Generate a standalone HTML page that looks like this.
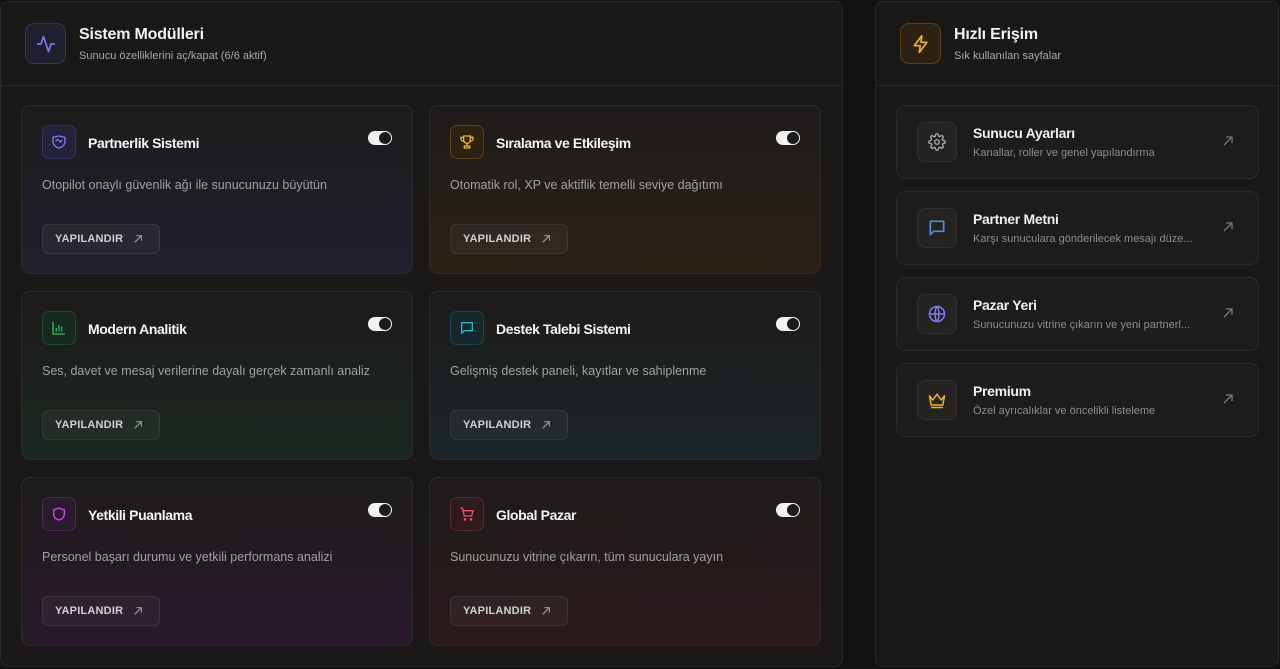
<!DOCTYPE html>
<html><head><meta charset="utf-8"><style>
*{box-sizing:border-box;margin:0;padding:0}
body{width:1280px;height:669px;background:#141210;font-family:"Liberation Sans",sans-serif;position:relative;overflow:hidden;color:#eee}
.panel{position:absolute;top:1px;height:666px;background:#1a1816;border:1px solid #2a2725;border-radius:8px}
.hdr{height:84px;border-bottom:1px solid #2a2725;position:relative}
.hicon{position:absolute;left:24px;top:21px;width:41px;height:41px;border-radius:9px;display:flex;align-items:center;justify-content:center}
.ht{position:absolute;left:78px;top:24px;font-size:16px;font-weight:bold;color:#f2f2f2;letter-spacing:-.2px}
.hs{position:absolute;left:78px;top:48px;font-size:11px;color:#a8a8a8}
.card{position:absolute;width:392px;height:169px;border:1px solid #2c2a28;border-radius:9px}
.ic{position:absolute;left:20px;top:19px;width:34px;height:34px;border-radius:7px;display:flex;align-items:center;justify-content:center}
.ct{position:absolute;left:66px;top:29px;font-size:14px;font-weight:bold;color:#f4f4f4;letter-spacing:-.4px}
.tg{position:absolute;left:346px;top:25px;width:24px;height:14px;border-radius:7px;background:#f2f2f2}
.tg::after{content:"";position:absolute;right:1px;top:1px;width:12px;height:12px;border-radius:50%;background:#1c1b1a}
.cd{position:absolute;left:20px;top:72px;font-size:12.5px;color:#a0a0a0}
.btn{position:absolute;left:20px;top:118px;width:118px;height:30px;border:1px solid #3a3836;border-radius:6px;background:rgba(255,255,255,.04);font-size:11px;font-weight:bold;color:#d0d0d0;display:flex;align-items:center;padding-left:12px;gap:10px;letter-spacing:.2px}
.item{position:absolute;left:20px;width:363px;height:74px;border:1px solid #2c2a28;border-radius:9px;background:#1e1c1a}
.ii{position:absolute;left:20px;top:16px;width:40px;height:40px;border-radius:8px;background:#252322;border:1px solid #33312f;display:flex;align-items:center;justify-content:center}
.it{position:absolute;left:76px;top:19px;font-size:14px;font-weight:bold;color:#eee;letter-spacing:-.3px}
.id{position:absolute;left:76px;top:41px;font-size:11px;color:#8c8c8c}
.ia{position:absolute;right:24px;top:29px}
</style></head><body>
<div class="panel" style="left:0;width:843px">
 <div class="hdr">
  <div class="hicon" style="background:#201f2e;border:1px solid #34335a"><svg width="20" height="20" viewBox="0 0 24 24" fill="none" stroke="#7b7cf0" stroke-width="2" stroke-linecap="round" stroke-linejoin="round"><path d="M22 12h-4l-3 9L9 3l-3 9H2"/></svg></div>
  <div class="ht">Sistem Modülleri</div><div class="hs">Sunucu özelliklerini aç/kapat (6/6 aktif)</div>
 </div>
</div>
<div class="panel" style="left:875px;width:404px">
 <div class="hdr">
  <div class="hicon" style="background:#2d2212;border:1px solid #5a4014"><svg width="20" height="20" viewBox="0 0 24 24" fill="none" stroke="#f5b414" stroke-width="2" stroke-linejoin="round"><path d="M13 2L4 14h7l-1 8 9-12h-7z"/></svg></div>
  <div class="ht">Hızlı Erişim</div><div class="hs">Sık kullanılan sayfalar</div>
 </div>
 <div class="item" style="top:103px"><div class="ii"><svg width="18" height="18" viewBox="0 0 24 24" fill="none" stroke="#aaa" stroke-width="1.8"><circle cx="12" cy="12" r="3"/><path d="M19.4 15a1.65 1.65 0 0 0 .33 1.82l.06.06a2 2 0 1 1-2.830 2.83l-.06-.06a1.65 1.65 0 0 0-2.82 1.17V21a2 2 0 1 1-4 0v-.09a1.65 1.65 0 0 0-2.82-1.17l-.06.06a2 2 0 1 1-2.83-2.83l.06-.06A1.65 1.65 0 0 0 3.1 14H3a2 2 0 1 1 0-4h.09a1.65 1.65 0 0 0 1.17-2.82l-.06-.06a2 2 0 1 1 2.83-2.830l.06.06A1.65 1.65 0 0 0 10 3.1V3a2 2 0 1 1 4 0v.09a1.65 1.65 0 0 0 2.82 1.17l.06-.06a2 2 0 1 1 2.83 2.83l-.06.06A1.65 1.65 0 0 0 20.9 10H21a2 2 0 1 1 0 4h-.09a1.65 1.65 0 0 0-1.51 1z"/></svg></div><div class="it">Sunucu Ayarları</div><div class="id">Kanallar, roller ve genel yapılandırma</div><svg class="ia" width="12" height="12" viewBox="0 0 12 12" stroke="#777" stroke-width="1.3" fill="none"><path d="M2 10L10 2M4 2h6v6"/></svg></div>
 <div class="item" style="top:189px"><div class="ii"><svg width="20" height="20" viewBox="0 0 24 24" fill="none" stroke="#4a8ee8" stroke-width="2" stroke-linejoin="round"><path d="M4 4h16v12H8l-4 4z"/></svg></div><div class="it">Partner Metni</div><div class="id">Karşı sunuculara gönderilecek mesajı düze...</div><svg class="ia" width="12" height="12" viewBox="0 0 12 12" stroke="#777" stroke-width="1.3" fill="none"><path d="M2 10L10 2M4 2h6v6"/></svg></div>
 <div class="item" style="top:275px"><div class="ii"><svg width="20" height="20" viewBox="0 0 24 24" fill="none" stroke="#7b7cf0" stroke-width="1.8"><circle cx="12" cy="12" r="9"/><path d="M3 12h18M12 3c3 3 3 15 0 18M12 3c-3 3-3 15 0 18"/></svg></div><div class="it">Pazar Yeri</div><div class="id">Sunucunuzu vitrine çıkarın ve yeni partnerl...</div><svg class="ia" width="12" height="12" viewBox="0 0 12 12" stroke="#777" stroke-width="1.3" fill="none"><path d="M2 10L10 2M4 2h6v6"/></svg></div>
 <div class="item" style="top:361px"><div class="ii"><svg width="20" height="20" viewBox="0 0 24 24" fill="none" stroke="#f5b414" stroke-width="1.8" stroke-linejoin="round"><path d="M3 7l4 5 5-7 5 7 4-5-2 11H5zM5 21h14"/></svg></div><div class="it">Premium</div><div class="id">Özel ayrıcalıklar ve öncelikli listeleme</div><svg class="ia" width="12" height="12" viewBox="0 0 12 12" stroke="#777" stroke-width="1.3" fill="none"><path d="M2 10L10 2M4 2h6v6"/></svg></div>
</div>

<div class="card" style="left:21px;top:105px;background:linear-gradient(#1d1b1a,#221f2e)"><div class="ic" style="background:#23223a;border:1px solid #34335a"><svg width="16" height="16" viewBox="0 0 24 24" fill="none" stroke="#7b7cf0" stroke-width="2"><path d="M3 5l9-2 9 2v6c0 5-4 9-9 10-5-1-9-5-9-10z M7 11l3-3 4 4 3-3"/></svg></div><div class="ct">Partnerlik Sistemi</div><div class="tg"></div><div class="cd">Otopilot onaylı güvenlik ağı ile sunucunuzu büyütün</div><div class="btn">YAPILANDIR <svg width="10" height="10" viewBox="0 0 12 12" stroke="#999" stroke-width="1.4" fill="none"><path d="M2 10L10 2M4 2h6v6"/></svg></div></div>
<div class="card" style="left:429px;top:105px;background:linear-gradient(#1d1b1a,#2b2117)"><div class="ic" style="background:#2d2212;border:1px solid #5a4014"><svg width="16" height="16" viewBox="0 0 24 24" fill="none" stroke="#f5b414" stroke-width="2"><path d="M7 3h10v6a5 5 0 0 1-10 0zM7 5H3v2a4 4 0 0 0 4 4M17 5h4v2a4 4 0 0 1-4 4M12 14v4M8 21h8v-3H8z"/></svg></div><div class="ct">Sıralama ve Etkileşim</div><div class="tg"></div><div class="cd">Otomatik rol, XP ve aktiflik temelli seviye dağıtımı</div><div class="btn">YAPILANDIR <svg width="10" height="10" viewBox="0 0 12 12" stroke="#999" stroke-width="1.4" fill="none"><path d="M2 10L10 2M4 2h6v6"/></svg></div></div>
<div class="card" style="left:21px;top:291px;background:linear-gradient(#1d1b1a,#1b2720)"><div class="ic" style="background:#16291f;border:1px solid #1f4a33"><svg width="16" height="16" viewBox="0 0 24 24" fill="none" stroke="#22c55e" stroke-width="2"><path d="M3 3v18h18M8 17v-5M12 17V8M16 17v-7"/></svg></div><div class="ct">Modern Analitik</div><div class="tg"></div><div class="cd">Ses, davet ve mesaj verilerine dayalı gerçek zamanlı analiz</div><div class="btn">YAPILANDIR <svg width="10" height="10" viewBox="0 0 12 12" stroke="#999" stroke-width="1.4" fill="none"><path d="M2 10L10 2M4 2h6v6"/></svg></div></div>
<div class="card" style="left:429px;top:291px;background:linear-gradient(#1d1b1a,#1b2528)"><div class="ic" style="background:#15272b;border:1px solid #1d4650"><svg width="16" height="16" viewBox="0 0 24 24" fill="none" stroke="#22b8d0" stroke-width="2" stroke-linejoin="round"><path d="M4 4h16v12H8l-4 4z"/></svg></div><div class="ct">Destek Talebi Sistemi</div><div class="tg"></div><div class="cd">Gelişmiş destek paneli, kayıtlar ve sahiplenme</div><div class="btn">YAPILANDIR <svg width="10" height="10" viewBox="0 0 12 12" stroke="#999" stroke-width="1.4" fill="none"><path d="M2 10L10 2M4 2h6v6"/></svg></div></div>
<div class="card" style="left:21px;top:477px;background:linear-gradient(#1d1b1a,#281a2b)"><div class="ic" style="background:#2a1a2e;border:1px solid #4e2a56"><svg width="16" height="16" viewBox="0 0 24 24" fill="none" stroke="#d946ef" stroke-width="2"><path d="M12 3l8 3v6c0 5-4 8-8 9-4-1-8-4-8-9V6z"/></svg></div><div class="ct">Yetkili Puanlama</div><div class="tg"></div><div class="cd">Personel başarı durumu ve yetkili performans analizi</div><div class="btn">YAPILANDIR <svg width="10" height="10" viewBox="0 0 12 12" stroke="#999" stroke-width="1.4" fill="none"><path d="M2 10L10 2M4 2h6v6"/></svg></div></div>
<div class="card" style="left:429px;top:477px;background:linear-gradient(#1d1b1a,#2c1a1c)"><div class="ic" style="background:#2e1a1d;border:1px solid #562a30"><svg width="16" height="16" viewBox="0 0 24 24" fill="none" stroke="#f0506a" stroke-width="2"><path d="M2 3h3l3 12h11l2-8H6"/><circle cx="9" cy="20" r="1"/><circle cx="18" cy="20" r="1"/></svg></div><div class="ct">Global Pazar</div><div class="tg"></div><div class="cd">Sunucunuzu vitrine çıkarın, tüm sunuculara yayın</div><div class="btn">YAPILANDIR <svg width="10" height="10" viewBox="0 0 12 12" stroke="#999" stroke-width="1.4" fill="none"><path d="M2 10L10 2M4 2h6v6"/></svg></div></div>
</body></html>
